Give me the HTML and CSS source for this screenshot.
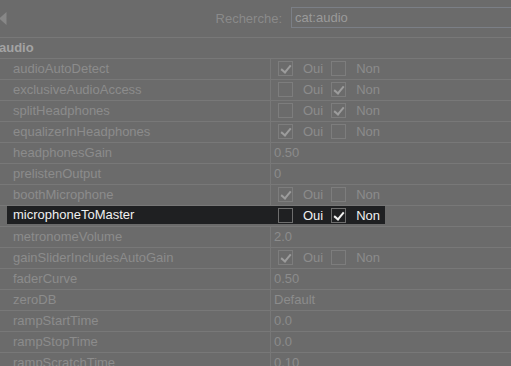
FILE: index.html
```html
<!DOCTYPE html>
<html>
<head>
<meta charset="utf-8">
<link rel="stylesheet" href="styles.css">
</head>
<body>
<div class="page">
  <div class="toolbar">
    <svg class="back" width="8" height="13" viewBox="0 0 8 13"><polygon points="7.5,0 7.5,13 0,6.5" fill="#878787"/></svg>
    <div class="search">
      <span class="search-label">Recherche:</span>
      <div class="search-box">cat:audio</div>
    </div>
  </div>
  <div class="section">audio</div>
  <div class="rows">
    <div class="row"><div class="name">audioAutoDetect</div><div class="value"><div class="bool"><span class="cb on"></span><span class="lbl">Oui</span><span class="cb"></span><span class="lbl">Non</span></div></div></div>
    <div class="row"><div class="name">exclusiveAudioAccess</div><div class="value"><div class="bool"><span class="cb"></span><span class="lbl">Oui</span><span class="cb on"></span><span class="lbl">Non</span></div></div></div>
    <div class="row"><div class="name">splitHeadphones</div><div class="value"><div class="bool"><span class="cb"></span><span class="lbl">Oui</span><span class="cb on"></span><span class="lbl">Non</span></div></div></div>
    <div class="row"><div class="name">equalizerInHeadphones</div><div class="value"><div class="bool"><span class="cb on"></span><span class="lbl">Oui</span><span class="cb"></span><span class="lbl">Non</span></div></div></div>
    <div class="row"><div class="name">headphonesGain</div><div class="value"><span class="txt">0.50</span></div></div>
    <div class="row"><div class="name">prelistenOutput</div><div class="value"><span class="txt">0</span></div></div>
    <div class="row"><div class="name">boothMicrophone</div><div class="value"><div class="bool"><span class="cb on"></span><span class="lbl">Oui</span><span class="cb"></span><span class="lbl">Non</span></div></div></div>
    <div class="row selected"><div class="name">microphoneToMaster</div><div class="value"><div class="bool"><span class="cb"></span><span class="lbl">Oui</span><span class="cb on"></span><span class="lbl">Non</span></div></div></div>
    <div class="row"><div class="name">metronomeVolume</div><div class="value"><span class="txt">2.0</span></div></div>
    <div class="row"><div class="name">gainSliderIncludesAutoGain</div><div class="value"><div class="bool"><span class="cb on"></span><span class="lbl">Oui</span><span class="cb"></span><span class="lbl">Non</span></div></div></div>
    <div class="row"><div class="name">faderCurve</div><div class="value"><span class="txt">0.50</span></div></div>
    <div class="row"><div class="name">zeroDB</div><div class="value"><span class="txt">Default</span></div></div>
    <div class="row"><div class="name">rampStartTime</div><div class="value"><span class="txt">0.0</span></div></div>
    <div class="row"><div class="name">rampStopTime</div><div class="value"><span class="txt">0.0</span></div></div>
    <div class="row"><div class="name">rampScratchTime</div><div class="value"><span class="txt">0.10</span></div></div>
  </div>
</div>
</body>
</html>
```
FILE: styles.css
```css
html, body {
  margin: 0;
  padding: 0;
  background: #6b6b6b;
  overflow: hidden;
}
body {
  width: 511px;
  height: 366px;
  font-family: "Liberation Sans", Arial, sans-serif;
  font-size: 13px;
  color: #8c8c8c;
}
.page {
  width: 511px;
  height: 366px;
  overflow: hidden;
}
.toolbar {
  border-bottom: 1px solid #787878;
  display: flex;
  align-items: center;
  box-sizing: border-box;
  height: 38px;
}
.back {
  display: block;
  margin-left: -1px;
  margin-top: -1px;
}
.search {
  margin-left: auto;
  display: flex;
  align-items: center;
  margin-right: -40px;
}
.search-label {
  margin-right: 9px;
  color: #8a8a8a;
}
.search-box {
  width: 260px;
  height: 21px;
  box-sizing: border-box;
  border: 1px solid #7b7f86;
  padding-left: 3px;
  line-height: 19px;
  color: #9a9a9a;
  margin-top: -2px;
}
.section {
  height: 20px;
  line-height: 20px;
  border-bottom: 1px solid #787878;
  font-weight: bold;
  color: #a3a3a3;
  margin-left: -1px;
}
.row {
  display: flex;
  height: 21px;
  box-sizing: border-box;
  border-bottom: 1px solid #787878;
}
.name {
  width: 271px;
  box-sizing: border-box;
  padding-left: 13px;
  border-right: 1px solid #787878;
  line-height: 20px;
  white-space: nowrap;
}
.value {
  display: flex;
  align-items: center;
}
.txt {
  padding-left: 3px;
  line-height: 20px;
}
.bool {
  display: flex;
  align-items: center;
  padding-left: 7px;
  padding-right: 5px;
  height: 18px;
  align-self: flex-start;
}
.cb {
  width: 15px;
  height: 15px;
  box-sizing: border-box;
  border: 1px solid #7d7d7d;
  position: relative;
}
.cb.on::after {
  content: "";
  position: absolute;
  left: 4px;
  top: 1px;
  width: 4px;
  height: 8px;
  border-right: 2px solid #9c9c9c;
  border-bottom: 2px solid #9c9c9c;
  transform: rotate(40deg);
}
.lbl {
  margin-left: 10px;
  margin-right: 8px;
}
.lbl:last-child {
  margin-right: 0;
}
.row.selected .name {
  margin-left: 7px;
  width: 264px;
  padding-left: 6px;
  background: #1f2022;
  color: #f0f0f0;
  height: 18px;
  line-height: 18px;
  border-right-color: #1f2022;
}
.row.selected .bool {
  background: #1f2022;
  color: #f0f0f0;
}
.row.selected .cb {
  border-color: #6e6e6e;
}
.row.selected .cb.on::after {
  border-color: #f2f2f2;
}
```
